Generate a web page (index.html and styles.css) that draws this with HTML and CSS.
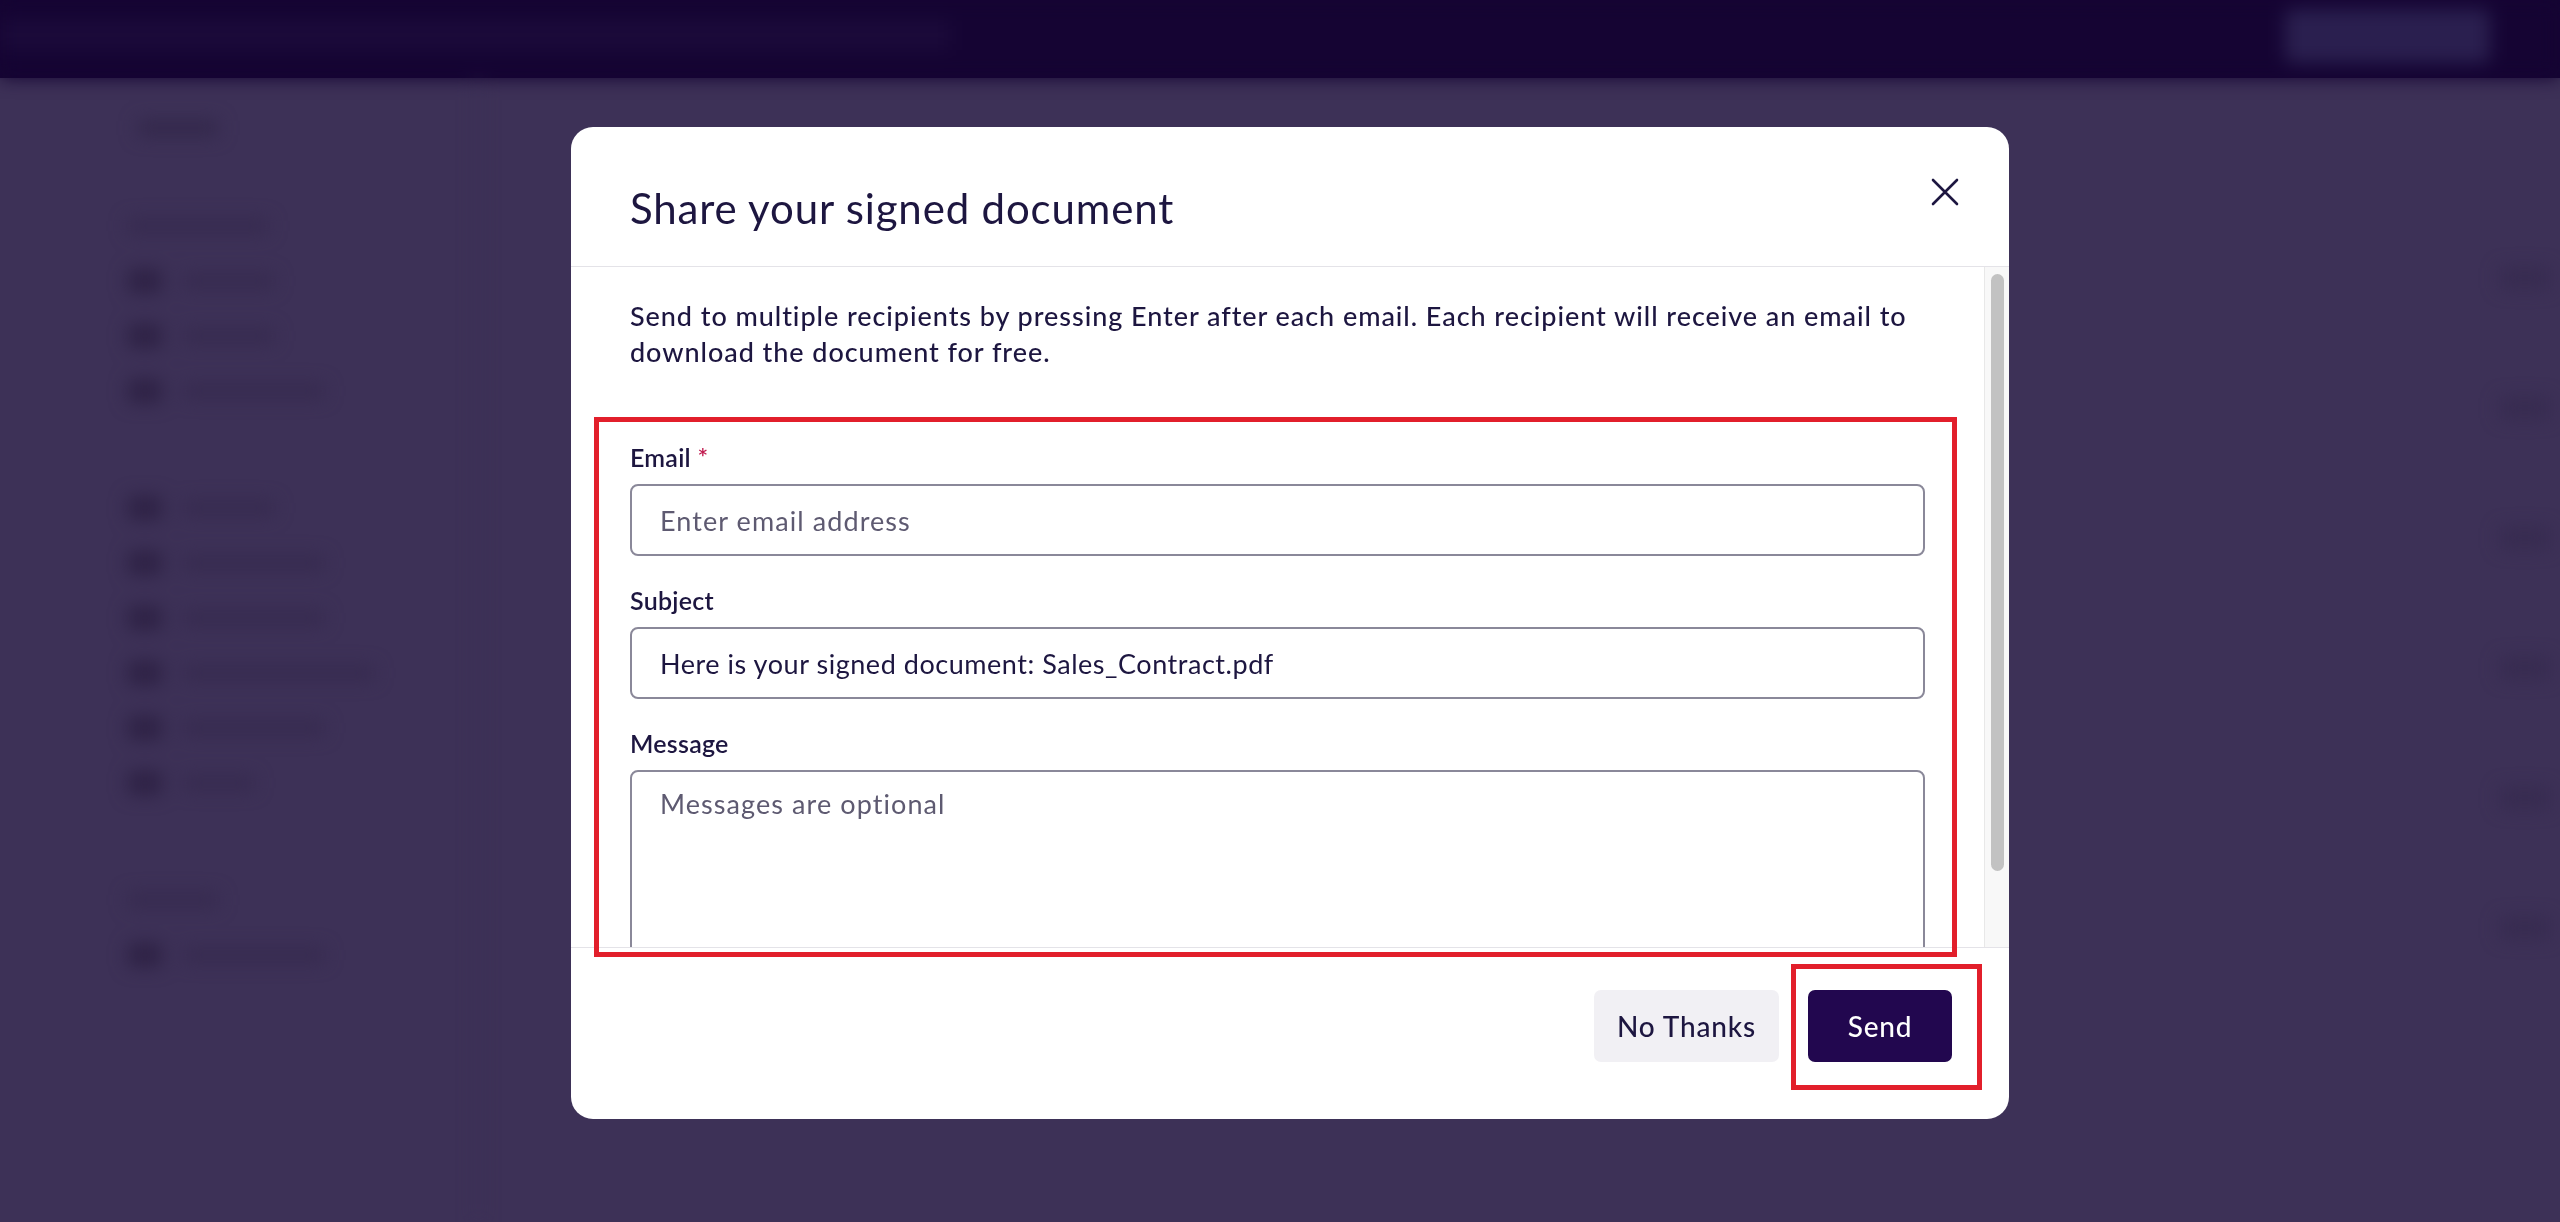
FILE: index.html
```html
<!DOCTYPE html>
<html lang="en">
<head>
    <meta charset="UTF-8">
    <meta name="viewport" content="width=device-width, initial-scale=1.0">
    <title>Share your signed document</title>
    <link rel="stylesheet" href="styles.css">
</head>
<body>
    <!-- page behind the dialog, blurred -->
    <div class="app" aria-hidden="true">
        <header class="topbar">
            <div class="topbar-text"></div>
            <div class="topbar-btn"></div>
        </header>
        <div class="app-main">
            <aside class="sidebar">
                <div class="side-title"></div>
                <div class="side-row"><span class="side-text wide"></span></div>
                <div class="side-row"><span class="side-icon"></span><span class="side-text"></span></div>
                <div class="side-row"><span class="side-icon"></span><span class="side-text"></span></div>
                <div class="side-row"><span class="side-icon"></span><span class="side-text wide"></span></div>
                <div class="side-gap"></div>
                <div class="side-row"><span class="side-icon"></span><span class="side-text"></span></div>
                <div class="side-row"><span class="side-icon"></span><span class="side-text wide"></span></div>
                <div class="side-row"><span class="side-icon"></span><span class="side-text wide"></span></div>
                <div class="side-row"><span class="side-icon"></span><span class="side-text wider"></span></div>
                <div class="side-row"><span class="side-icon"></span><span class="side-text wide"></span></div>
                <div class="side-row"><span class="side-icon"></span><span class="side-text short"></span></div>
                <div class="side-gap"></div>
                <div class="side-row"><span class="side-text"></span></div>
                <div class="side-row"><span class="side-icon"></span><span class="side-text wide"></span></div>
            </aside>
            <section class="content"></section>
            <aside class="rightpanel">
                <div class="rp-row"></div>
                <div class="rp-row"></div>
                <div class="rp-row"></div>
                <div class="rp-row"></div>
                <div class="rp-row"></div>
                <div class="rp-row"></div>
            </aside>
        </div>
    </div>

    <div class="overlay">
        <div class="modal" role="dialog" aria-labelledby="shareTitle">
            <div class="modal-header">
                <h2 id="shareTitle">Share your signed document</h2>
                <button class="close-btn" aria-label="Close">
                    <svg viewBox="0 0 28 28" width="28" height="28"><path d="M2 2 L26 26 M26 2 L2 26" stroke="#1d1640" stroke-width="2.6" stroke-linecap="round" fill="none"/></svg>
                </button>
            </div>

            <div class="modal-body">
                <div class="body-scroll">
                    <p class="intro">Send to multiple recipients by pressing Enter after each email. Each recipient will receive an email to download the document for free.</p>

                    <div class="field">
                        <label for="email">Email <span class="req">*</span></label>
                        <input type="text" id="email" placeholder="Enter email address">
                    </div>
                    <div class="field">
                        <label for="subject">Subject</label>
                        <input type="text" id="subject" value="Here is your signed document: Sales_Contract.pdf">
                    </div>
                    <div class="field">
                        <label for="message">Message</label>
                        <textarea id="message" placeholder="Messages are optional"></textarea>
                    </div>
                </div>
                <div class="scrollbar"><div class="scroll-thumb"></div></div>
            </div>

            <div class="modal-footer">
                <button class="btn btn-light">No Thanks</button>
                <button class="btn btn-dark">Send</button>
            </div>

            <!-- review highlights -->
            <div class="mark mark-form"></div>
            <div class="mark mark-send"></div>
        </div>
    </div>
</body>
</html>
```

FILE: styles.css
```css
html, body { margin: 0; height: 100%; }
body {
    font-family: "Lato", "Liberation Sans", sans-serif;
    background: linear-gradient(#150433 0 78px, #3d3157 78px);
    color: #1d1640;
    overflow: hidden;
}

/* blurred app behind the dialog */
.app { height: 100vh; filter: blur(9px); overflow: hidden; }
.topbar {
    height: 78px; background: #150433;
    display: flex; align-items: center; justify-content: space-between;
    padding: 0 70px 0 0;
}
.topbar-text { width: 950px; height: 30px; background: #1b0a3a; margin-top: -8px; }
.topbar-btn { width: 205px; height: 54px; background: #2a1f4f; border-radius: 6px; margin-top: -6px; }

.app-main { display: flex; height: calc(100vh - 78px); }
.sidebar { width: 480px; padding: 42px 0 0 128px; box-sizing: border-box; border-right: 3px solid #3a2e53; }
.side-title { width: 80px; height: 16px; background: #33284b; margin: 0 0 62px 10px; }
.side-row { display: flex; align-items: center; gap: 22px; height: 55px; }
.side-icon { width: 34px; height: 24px; background: #2e2245; border-radius: 4px; }
.side-text { width: 90px; height: 14px; background: #362a4f; }
.side-text.wide { width: 140px; }
.side-text.wider { width: 190px; }
.side-text.short { width: 70px; }
.side-gap { height: 62px; }
.content { flex: 1; }
.rightpanel { width: 60px; padding-top: 190px; display: flex; flex-direction: column; gap: 110px; }
.rp-row { height: 20px; width: 50px; background: #372b50; }

/* dialog */
.overlay {
    position: fixed; inset: 0;
    display: flex; justify-content: center; align-items: flex-start;
    padding: 127px 0 0 20px; box-sizing: border-box;
}
.modal {
    position: relative;
    width: 1438px; height: 992px;
    background: #fff; border-radius: 22px;
    display: flex; flex-direction: column;
    overflow: hidden;
}
.modal-header {
    display: flex; justify-content: space-between; align-items: flex-start;
    height: 140px; box-sizing: border-box;
    padding: 51px 50px 0 59px;
    border-bottom: 1px solid #e4e3e8;
}
.modal-header h2 {
    margin: 6px 0 0; font-size: 42px; font-weight: 400; letter-spacing: 0.02em;
    line-height: 48px; color: #1d1640;
}
.close-btn { background: none; border: none; padding: 0; width: 28px; height: 28px; cursor: pointer; }
.close-btn svg { display: block; }

.modal-body { flex: 1; display: flex; min-height: 0; }
.body-scroll { flex: 1; overflow: hidden; padding: 31px 59px 30px 59px; }
.scrollbar {
    width: 25px; box-sizing: border-box;
    background: #f8f8f8; border-left: 1px solid #e8e8e8;
    padding: 7px 5px 0 6px;
}
.scroll-thumb { height: 597px; background: #c2c2c2; border-radius: 8px; }

.intro {
    margin: 0 0 71px; font-size: 27px; font-weight: 500; letter-spacing: 0.035em;
    line-height: 36px; color: #1d1640;
}

.field { display: flex; flex-direction: column; margin-bottom: 28px; }
.field label {
    font-size: 25px; font-weight: 600; letter-spacing: 0.01em;
    line-height: 32px; margin-bottom: 11px; color: #1d1640;
}
.field .req { color: #c0184d; }
.field input, .field textarea {
    font-family: inherit; font-size: 27px; color: #1d1640; letter-spacing: 0.02em;
    border: 2px solid #8a8899; border-radius: 8px;
    padding: 0 28px; box-sizing: border-box; width: 100%;
    background: #fff;
}
.field input { height: 72px; }
.field textarea { height: 220px; padding-top: 16px; line-height: 32px; resize: none; }
.field input::placeholder, .field textarea::placeholder { color: #5e5a71; letter-spacing: 0.04em; }

.modal-footer {
    display: flex; justify-content: flex-end; gap: 29px;
    padding: 42px 57px 57px;
    border-top: 1px solid #e4e3e8;
}
.btn {
    height: 72px; border: none; border-radius: 7px;
    font-family: inherit; font-size: 28px; font-weight: 500; letter-spacing: 0.03em;
    cursor: pointer;
}
.btn-light { background: #f1f0f4; color: #1d1640; padding: 0 23px; }
.btn-dark { background: #22074f; color: #fff; min-width: 144px; }

.mark { position: absolute; border: 5px solid #e21f2b; pointer-events: none; box-sizing: border-box; }
.mark-form { left: 23px; top: 290px; width: 1363px; height: 540px; }
.mark-send { left: 1220px; top: 837px; width: 191px; height: 126px; }
```
